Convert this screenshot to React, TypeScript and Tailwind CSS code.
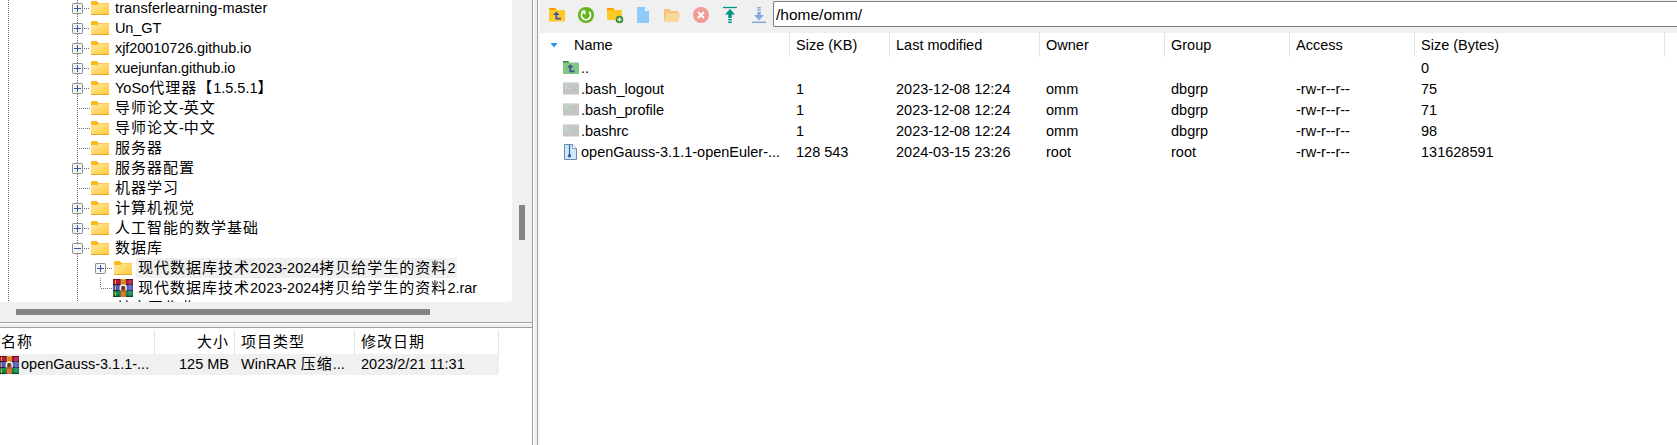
import React from "react";

function T({ s }: { s: string }) {
  return (
    <>
      {s.split(/([\u3000-\u9fff]+)/).map((p, i) =>
        i % 2 ? (
          <span key={i} className="font-['Noto_Sans_CJK_SC',sans-serif] text-[15px] leading-[0] tracking-[1px]">{p}</span>
        ) : (
          p
        )
      )}
    </>
  );
}

function Folder() {
  return (
    <svg width="18" height="14" viewBox="0 0 18 14" className="shrink-0">
      <defs>
        <linearGradient id="fg" x1="0" y1="0" x2="1" y2="1">
          <stop offset="0" stopColor="#ffe9a0" />
          <stop offset="1" stopColor="#ffc938" />
        </linearGradient>
      </defs>
      <path d="M0 1q0-1 1-1h5l1.500 2H17q1 0 1 1v3H0z" fill="#fbb91c" />
      <path d="M0 4h6.500L8 2.600H17q1 0 1 1V13q0 1-1 1H1q-1 0-1-1z" fill="url(#fg)" />
      <path d="M0 13h18v.3q0 .7-1 .7H1q-1 0-1-.7z" fill="#e8a722" />
    </svg>
  );
}

function Rar() {
  return (
    <svg width="20" height="18" viewBox="0 0 20 18" className="shrink-0">
      <rect y="0" width="20" height="6" fill="#b0163c" />
      <rect y="0" width="20" height="1" fill="#5c1030" />
      <rect y="5" width="20" height="1" fill="#3d1430" />
      <rect y="6" width="20" height="6" fill="#4a58bd" />
      <rect y="11" width="20" height="1" fill="#1c2458" />
      <rect y="12" width="20" height="6" fill="#128a4c" />
      <rect y="16.500" width="20" height="1.500" fill="#0a4a34" />
      <path d="M2.500 1v4M2.500 7v4M2.500 13v4" stroke="#f0a828" />
      <path d="M17 1v16" stroke="#ffffff" strokeOpacity=".15" strokeWidth="3" />
      <rect x="7.500" y="0" width="5.500" height="18" fill="#b5622c" />
      <rect x="8" width="4.500" height="6" fill="#f0a62c" />
      <path d="M8.500 2h3.500M8.500 4h3.500" stroke="#9a5a18" strokeWidth=".8" />
      <path d="M7.300 11.500V8q0-1.700 2.900-1.700T13.200 8v3.500" fill="none" stroke="#ececec" strokeWidth="1.400" />
      <rect x="9.200" y="7" width="2" height="4" fill="#54331f" />
      <rect x="8" y="13" width="4.500" height="5" fill="#dd7636" />
    </svg>
  );
}

function Toggle({ open }: { open?: boolean }) {
  return (
    <svg width="11" height="11" viewBox="0 0 11 11" className="relative shrink-0">
      <rect x=".5" y=".5" width="10" height="10" rx=".8" fill="#f6f6f6" stroke="#8c8c8c" />
      <path d={open ? "M2 5.500h7" : "M2 5.500h7M5.500 2v7"} stroke="#3555a8" />
    </svg>
  );
}

const hdots = "h-px shrink-0 bg-[repeating-linear-gradient(90deg,#707070_0_1px,transparent_1px_2px)]";
const vdots = "w-px shrink-0 bg-[repeating-linear-gradient(180deg,#707070_0_1px,transparent_1px_2px)]";

const rows: [string, boolean][] = [
  ["transferlearning-master", true],
  ["Un_GT", true],
  ["xjf20010726.github.io", true],
  ["xuejunfan.github.io", true],
  ["YoSo代理器【1.5.5.1】", true],
  ["导师论文-英文", false],
  ["导师论文-中文", false],
  ["服务器", false],
  ["服务器配置", true],
  ["机器学习", false],
  ["计算机视觉", true],
  ["人工智能的数学基础", true],
  ["数据库", true],
];

const tracking: Record<string, string> = {
  "transferlearning-master": "tracking-[0.11px]",
  "xjf20010726.github.io": "tracking-[-0.08px]",
  "xuejunfan.github.io": "tracking-[-0.08px]",
  "Un_GT": "tracking-[-0.1px]",
};

function Guides() {
  return (
    <>
      <span className={vdots + " ml-2 h-5"} />
      <span className={vdots + " ml-[68px] h-5"} />
    </>
  );
}

function Tree() {
  return (
    <div className="h-[302px] w-[512px] overflow-hidden rounded-br-sm bg-white">
      <div className="-mt-0.5">
        {rows.map(([name, exp]) => (
          <div key={name} className="flex h-5 items-center whitespace-pre">
            <Guides />
            {exp ? (
              <span className="-ml-[6px] flex items-center">
                <Toggle open={name === "数据库"} />
                <span className={hdots + " ml-px w-[5px]"} />
                <span className="w-[2px]" />
              </span>
            ) : (
              <span className={hdots + " ml-px mr-px w-[11px]"} />
            )}
            <Folder />
            <span className={"ml-[6px] leading-5 " + (tracking[name] ?? "")}><T s={name} /></span>
          </div>
        ))}
        <div className="flex h-5 items-center whitespace-pre">
          <Guides />
          <span className="ml-[17px]"><Toggle /></span>
          <span className={hdots + " ml-px mr-[2px] w-[5px]"} />
          <Folder />
          <span className="ml-1 h-5 w-[321px] bg-[#f0f0f0] pl-0.5 leading-5"><T s="现代数据库技术2023-2024拷贝给学生的资料2" /></span>
        </div>
        <div className="flex h-5 items-center whitespace-pre">
          <Guides />
          <span className={vdots + " ml-[22px] h-[10px] self-start"} />
          <span className={hdots + " w-3"} />
          <Rar />
          <span className="ml-[5px] leading-5"><T s="现代数据库技术2023-2024拷贝给学生的资料2.rar" /></span>
        </div>
        <div className="flex h-5 items-center whitespace-pre">
          <Guides />
          <span className="ml-[38px] leading-5"><T s="其它同作业" /></span>
        </div>
      </div>
    </div>
  );
}

const svg = "h-[18px] w-[18px] shrink-0";

function Toolbar() {
  return (
    <div className="flex h-[33px] items-start bg-[#f0f0f0]">
      <div className="flex w-[235px] shrink-0 items-center gap-[10.800px] pl-[8px] pt-[6px]">
        <svg className={svg} viewBox="0 0 18 18">
          <path d="M1 2h6l2 2h8v11.500H1z" fill="#ffca28" /><path d="M1 2h6l2 2H1z" fill="#ffa000" />
          <path d="M5 9l3.300-3.500L11.600 9z" fill="#3f51b5" /><path d="M8.300 8v4.700H13" fill="none" stroke="#3f51b5" strokeWidth="1.800" />
        </svg>
        <svg className={svg} viewBox="0 0 18 18">
          <circle cx="9" cy="9" r="8.100" fill="#64b41e" />
          <path d="M5.800 6a4.500 4.500 0 1 0 6.400 0" fill="none" stroke="#fff" strokeWidth="1.800" /><path d="M4 4.500h4.500V9z" fill="#fff" />
        </svg>
        <svg className={svg} viewBox="0 0 18 18">
          <path d="M1 2h6l1.500 2H16v10H1z" fill="#ffca28" /><path d="M1 2h6l1.500 2H1z" fill="#ffa000" />
          <circle cx="13.500" cy="13.500" r="3.800" fill="#388e3c" /><path d="M13.500 11.500v4M11.500 13.500h4" stroke="#fff" strokeWidth="1.300" />
        </svg>
        <svg className={svg} viewBox="0 0 18 18">
          <path d="M3 1h8l4 4v12H3z" fill="#90caf9" /><path d="M11 1v4h4z" fill="#e1f5fe" />
        </svg>
        <svg className={svg} viewBox="0 0 18 18">
          <path d="M1 3h5.500L8 5h7v10.500H1z" fill="#f3c27c" /><path d="M4 7h13l-1.500 8.800H1z" fill="#f7da97" />
        </svg>
        <svg className={svg} viewBox="0 0 18 18">
          <circle cx="9" cy="9" r="8" fill="#f29b96" /><path d="M6 6l6 6M12 6l-6 6" stroke="#fff" strokeWidth="1.800" />
        </svg>
        <svg className={svg} viewBox="0 0 18 18">
          <path d="M2 1.500h14" stroke="#009688" strokeWidth="1.300" /><path d="M9 3l5 5.500H4z" fill="#009688" />
          <path d="M9 8v4M9 13v1.500M9 15.500v1.500" stroke="#009688" strokeWidth="3.500" />
        </svg>
        <svg className={svg} viewBox="0 0 18 18">
          <path d="M2 16.300h14" stroke="#84abdc" strokeWidth="1.500" /><path d="M9 14.500L4 9h10z" fill="#84abdc" />
          <path d="M9 1v1.500M9 3.500V5M9 6v4" stroke="#84abdc" strokeWidth="3.500" />
        </svg>
      </div>
      <div className="ml-[-2px] mt-px h-[26px] flex-1 rounded-l-[2px] border border-r-0 border-[#808080] bg-white pl-[2px] text-[15.500px] leading-[25px]">/home/omm/</div>
    </div>
  );
}

const cols = "grid grid-cols-[250px_100px_150px_125px_125px_125px_250px_1fr] whitespace-pre";

const files: string[][] = [
  ["..", "", "", "", "", "", "0"],
  [".bash_logout", "1", "2023-12-08 12:24", "omm", "dbgrp", "-rw-r--r--", "75"],
  [".bash_profile", "1", "2023-12-08 12:24", "omm", "dbgrp", "-rw-r--r--", "71"],
  [".bashrc", "1", "2023-12-08 12:24", "omm", "dbgrp", "-rw-r--r--", "98"],
  ["openGauss-3.1.1-openEuler-...", "128 543", "2024-03-15 23:26", "root", "root", "-rw-r--r--", "131628591"],
];

function FileIcon({ i }: { i: number }) {
  return (
    <svg width="18" height="18" viewBox="0 0 18 18" className="shrink-0">
      {i === 0 ? (
        <>
          <path d="M1 2h5l1.500 1.500H17V15H1z" fill="#81c784" /><path d="M1 2h5l1.500 1.500H1z" fill="#2e8b34" />
          <path d="M8.300 7.500v4.800H12.500" fill="none" stroke="#4a4f94" strokeWidth="1.800" /><path d="M5 8.500l3.300-3.300 3.300 3.300z" fill="#4a4f94" />
        </>
      ) : i < 4 ? (
        <>
          <rect x="1" y="2.500" width="16" height="12" fill="#c4c4c4" /><path d="M1 3h16" stroke="#d8d8d8" />
          <path d="M3 4.500L5.200 6.500 3 8.500M5.500 8.500h2.500" fill="none" stroke="#b4f0b4" strokeWidth="1.100" />
        </>
      ) : (
        <>
          <path d="M2.500 1.500h8l4 4v11h-12z" fill="#cde7fb" stroke="#6d8aa6" /><path d="M10.500 1.500v4h4" fill="#fff" stroke="#6d8aa6" strokeWidth=".8" />
          <path d="M7.500 2v10" stroke="#3a66b8" strokeWidth="1.200" /><circle cx="7.500" cy="12.800" r="1.700" fill="#3a55b0" />
        </>
      )}
    </svg>
  );
}

function Remote() {
  return (
    <div className="min-w-0 flex-1 bg-white">
      <Toolbar />
      <div className={cols + " h-6 leading-6"}>
        {["Name", "Size (KB)", "Last modified", "Owner", "Group", "Access", "Size (Bytes)"].map((h, i) =>
          i === 0 ? (
            <div key={h} className="flex items-center border-r border-[#e3e3e3]">
              <svg width="8" height="5" viewBox="0 0 8 5" className="ml-[10px]"><path d="M.5 0h7L4 4.500z" fill="#2196e8" /></svg>
              <span className="ml-4">{h}</span>
            </div>
          ) : (
            <div key={h} className="border-r border-[#e3e3e3] pl-[6px]">{h}</div>
          )
        )}
      </div>
      {files.map((f, r) => (
        <div key={f[0]} className={cols + " h-[21px] leading-[21px]"}>
          {f.map((c, i) =>
            i === 0 ? (
              <div key={i} className="flex h-[21px] items-center pl-[22px]"><FileIcon i={r} /><span className="ml-px pt-[2px]">{c}</span></div>
            ) : (
              <div key={i} className="pl-[6px] pt-px">{c}</div>
            )
          )}
        </div>
      ))}
    </div>
  );
}

export default function App() {
  return (
    <div className="flex h-[445px] w-[1677px] overflow-hidden bg-[#f0f0f0] font-['Liberation_Sans',Arial,sans-serif] text-[14.500px] text-black">
      <div className="flex w-[533px] shrink-0 flex-col border-r border-[#a0a0a0]">
        <div className="flex h-[302px]">
          <Tree />
          <div className="flex-1 pl-[7px] pt-[205px]"><div className="h-[35px] w-[6px] bg-[#858585]" /></div>
        </div>
        <div className="h-5 shrink-0 pl-4 pt-[7px]"><div className="h-[6px] w-[414px] bg-[#858585]" /></div>
        <div className="h-px shrink-0 bg-[#a0a0a0]" />
        <div className="h-1 shrink-0 border-t border-white" />
        <div className="h-px shrink-0 bg-[#a0a0a0]" />
        <div className="flex-1 bg-white pt-[2px]">
          <div className="grid h-6 w-[499px] grid-cols-[155px_80px_120px_144px] whitespace-pre leading-6">
            <div className="border-r border-[#e3e3e3] pl-px"><T s="名称" /></div>
            <div className="border-r border-[#e3e3e3] pr-[5px] text-right"><T s="大小" /></div>
            <div className="border-r border-[#e3e3e3] pl-[6px]"><T s="项目类型" /></div>
            <div className="border-r border-[#e3e3e3] pl-[6px]"><T s="修改日期" /></div>
          </div>
          <div className="grid h-[21px] w-[499px] grid-cols-[155px_80px_120px_144px] whitespace-pre bg-[#f0f0f0] leading-[21px]">
            <div className="flex items-center"><span className="-ml-px"><Rar /></span><span className="ml-[2px]">openGauss-3.1.1-...</span></div>
            <div className="pr-[6px] text-right">125 MB</div>
            <div className="pl-[6px]"><T s="WinRAR 压缩..." /></div>
            <div className="pl-[6px]">2023/2/21 11:31</div>
          </div>
        </div>
      </div>
      <div className="w-1 shrink-0 border-l border-white" />
      <div className="w-[3px] shrink-0 border-l border-[#a0a0a0] bg-[#f8f8f8]" />
      <Remote />
    </div>
  );
}
